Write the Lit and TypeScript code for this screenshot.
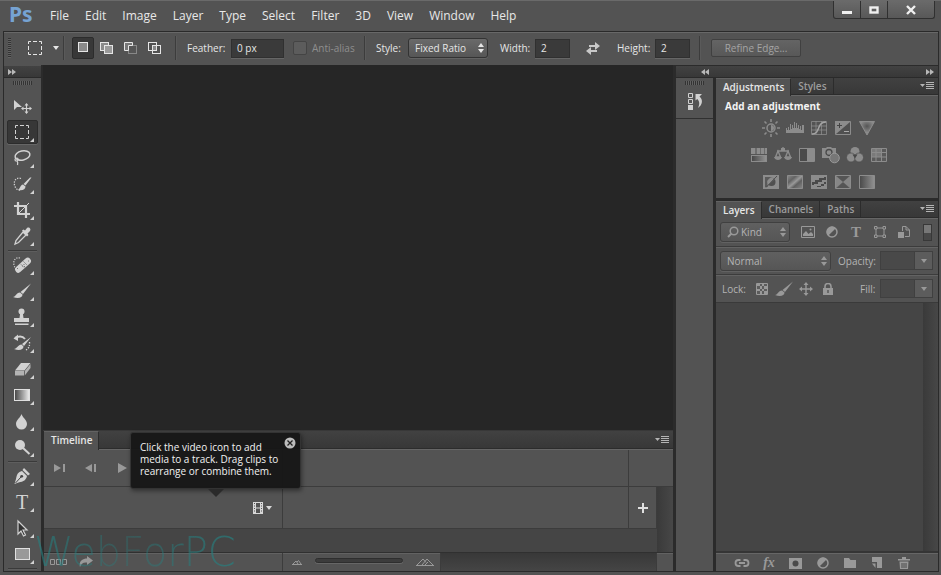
import { LitElement, html, css, svg, nothing } from "lit";
import { customElement, property, state } from "lit/decorators.js";
import { classMap } from "lit/directives/class-map.js";

type Glyph = { w: number; h: number; body: unknown };
const g = (w: number, h: number, body: unknown): Glyph => ({ w, h, body });

const glyphs: Record<string, Glyph> = {
  // toolbox
  move: g(20, 20, svg`<path d="M2 4v10l3-3h5z" fill="currentColor"/><path d="M14.5 8v9M10 12.500h9" stroke="currentColor" stroke-width="1.200"/><path d="M12.500 9.500l2-2.500 2 2.500zM12.500 15.500l2 2.500 2-2.500zM11.500 10.500l-2.500 2 2.500 2zM17.500 10.500l2.500 2-2.500 2z" fill="currentColor"/>`),
  marquee: g(20, 20, svg`<path d="M3.500 6V3.500H6M8 3.500h4M14 3.500h2.500V6M16.500 8v4M16.500 14v2.500H14M12 16.500H8M6 16.500H3.500V14M3.500 12V8" fill="none" stroke="currentColor"/>`),
  lasso: g(20, 20, svg`<ellipse cx="10.500" cy="7.500" rx="7.500" ry="4.500" transform="rotate(-12 10.500 7.500)" fill="none" stroke="currentColor" stroke-width="1.500"/><path d="M4.500 10c-2 .5-2 3 0 3s2-3 .3-3M5 13c1 1 1 2 .5 4" fill="none" stroke="currentColor" stroke-width="1.200"/>`),
  quick: g(20, 20, svg`<path d="M9 4.500C4 3 1.500 7 2.500 11c.7 3 3 5.500 6 5" fill="none" stroke="currentColor" stroke-width="1.300" stroke-dasharray="1.300 1.300"/><path d="M19.500 3.500l-6 8-2-1.500 6.500-6.500zM11 10.500l2.500 2c0 3-3 4.500-7.500 3.500 2-.8 2-5 5-5.500z" fill="currentColor"/>`),
  crop: g(20, 20, svg`<path d="M6 2v12h12M2 6h12v12" fill="none" stroke="currentColor" stroke-width="2.200"/><path d="M6.500 13.500L17 3" stroke="currentColor"/>`),
  dropper: g(20, 20, svg`<path d="M11 6l3 3-7.500 7.500L3 18l1-3.500z" fill="#555" stroke="currentColor" stroke-width="1.300"/><path d="M10 4.500l1.500-1 1.500 1 2-2.500c2-1.500 4.500 1 3 3l-2.500 2.500 1 1.500-1.500 1.500z" fill="currentColor"/>`),
  heal: g(20, 20, svg`<path d="M8 3C3 2 1 6 2 10c.5 2 1 3 2.500 4" fill="none" stroke="currentColor" stroke-width="1.200" stroke-dasharray="1.200 1.300"/><rect x="1.500" y="7" width="19" height="6.500" rx="3.200" transform="rotate(-42 11 10.200)" fill="currentColor"/><path d="M8.300 8.700l4 4M11.200 6.200l4 4" stroke="#999"/><path d="M11.500 9.500h1M10 11h1M12 11.500h1M5 13.500h1M16 6h1" stroke="#777"/>`),
  brush: g(20, 20, svg`<path d="M19 2.500L11 13l-2.500-2zM8 11.500l2.500 2c0 3-4 4.500-9.500 2.500 3 0 3-4.500 7-4.500z" fill="currentColor"/>`),
  stamp: g(20, 20, svg`<circle cx="9.500" cy="4.500" r="3" fill="currentColor"/><path d="M8.200 6h2.600l.7 5H17v4H2v-4h5.500zM3 16.500h13.500V18H3z" fill="currentColor"/>`),
  history: g(20, 20, svg`<path d="M19 4l-7 9-2-2zM9.500 11.500l2 2c0 3-4 4.500-9.500 2.500 3 0 4-4.500 7.500-4.500z" fill="currentColor"/><path d="M3 5c4-2 8-1.500 10 1" fill="none" stroke="currentColor" stroke-width="2"/><path d="M1.500 5.500L6 1.500V8z" fill="currentColor"/><path d="M17.500 9c.5 4-1 7-4 8" fill="none" stroke="currentColor" stroke-width="1.300" stroke-dasharray="1.300 1.300"/>`),
  eraser: g(20, 20, svg`<path d="M9 4h9.500l-6 7.500H3z" fill="currentColor"/><path d="M3 12h9v4.500H3zM12.800 12l5.700-7v4l-5.700 7.500z" fill="#b4b4b4"/>`),
  gradient: g(20, 20, svg`<linearGradient id="gr"><stop stop-color="#444"/><stop offset="1" stop-color="#eee"/></linearGradient><rect x="2.500" y="4.500" width="15" height="11" fill="url(#gr)" stroke="#e0e0e0"/>`),
  drop: g(20, 20, svg`<path d="M9.500 3c1 3.500 5.500 6 5.500 10a5.500 5.500 0 0 1-11 0c0-4 4.500-6.500 5.500-10z" fill="currentColor"/>`),
  dodge: g(20, 20, svg`<circle cx="8" cy="8" r="5" fill="currentColor"/><path d="M11 11l6.500 6" stroke="currentColor" stroke-width="2"/>`),
  pen: g(20, 20, svg`<path d="M12 2l6 6-2 1.500-5.500-5.500z" fill="currentColor"/><path d="M10 5l5 5c-1 4-3 5.500-8.500 6.500l-4 1.500L4 13c1-5 2-7 6-8z" fill="currentColor"/><path d="M3.500 17l5.500-6" stroke="#444"/><circle cx="9.700" cy="10.300" r="1.400" fill="#444"/>`),
  pointer: g(20, 20, svg`<path d="M6 3v13l3-3 2.500 5 2-1-2.500-5h4z" fill="#333" stroke="currentColor" stroke-width="1.200"/>`),
  shape: g(20, 20, svg`<rect x="3.500" y="4.500" width="14" height="11" fill="#999" stroke="#e0e0e0"/>`),
  // window and small marks
  caret: g(6, 4, svg`<path d="M0 0h6L3 4z" fill="currentColor"/>`),
  updown: g(6, 10, svg`<path d="M0 4h6L3 0zM0 6h6l-3 4z" fill="currentColor"/>`),
  right2: g(8, 6, svg`<path d="M0 0l4 3-4 3zM4 0l4 3-4 3z" fill="currentColor"/>`),
  left2: g(8, 6, svg`<path d="M4 0L0 3l4 3zM8 0L4 3l4 3z" fill="currentColor"/>`),
  flyout: g(14, 8, svg`<path d="M0 2h5L2.500 5z" fill="currentColor"/><path d="M6 .5h8M6 2.500h8M6 4.500h8M6 6.500h8" stroke="currentColor"/>`),
  min: g(10, 10, svg`<path d="M0 6h10v3H0z" fill="currentColor"/>`),
  max: g(10, 10, svg`<rect x="1.500" y="2.500" width="7" height="5" fill="none" stroke="currentColor" stroke-width="2.400"/>`),
  close: g(10, 10, svg`<path d="M1 1l8 8M9 1L1 9" stroke="currentColor" stroke-width="2.400"/>`),
  // selection modes
  selNew: g(14, 14, svg`<rect x="2.500" y="1.500" width="9" height="9" fill="#8a8a8a" stroke="currentColor"/>`),
  selAdd: g(14, 14, svg`<rect x=".5" y="1.500" width="8" height="8" fill="#8a8a8a" stroke="currentColor"/><rect x="4.500" y="4.500" width="8" height="8" fill="#9a9a9a" stroke="currentColor"/>`),
  selSub: g(14, 14, svg`<rect x="4.500" y="4.500" width="8" height="8" fill="#555" stroke="#888"/><path d="M4.500 9.500h-4v-8h8v3h-4z" fill="#777" stroke="currentColor"/>`),
  selInt: g(14, 14, svg`<rect x=".5" y="1.500" width="8" height="8" fill="none" stroke="currentColor"/><rect x="4.500" y="4.500" width="8" height="8" fill="none" stroke="currentColor"/><path d="M5 5h3v4H5z" fill="#888"/>`),
  swap: g(14, 14, svg`<path d="M3 4h6V1l5 4-5 4V6H3zM11 9H5V6L0 10l5 4v-3h6z" fill="currentColor"/>`),
  // timeline
  toStart: g(12, 8, svg`<path d="M0 0l7 4-7 4zM9 0h2v8H9z" fill="currentColor"/>`),
  stepBack: g(12, 8, svg`<path d="M7 0L0 4l7 4zM9 0h2v8H9z" fill="currentColor"/>`),
  play: g(10, 10, svg`<path d="M1 0l9 5-9 5z" fill="currentColor"/>`),
  film: g(10, 12, svg`<path d="M0 0h10v12H0zM3 1v4.500h4V1zM3 6.500V11h4V6.500zM1 1v1h1V1zM1 3.500v1h1v-1zM1 6v1h1V6zM1 8.500v1h1v-1zM8 1v1h1V1zM8 3.500v1h1v-1zM8 6v1h1V6zM8 8.500v1h1v-1z" fill="currentColor" fill-rule="evenodd"/>`),
  plus: g(10, 10, svg`<path d="M4 0h2v4h4v2H6v4H4V6H0V4h4z" fill="currentColor"/>`),
  frames: g(18, 8, svg`<path d="M.5 1.500h4v5h-4zM6.500 1.500h4v5h-4zM12.500 1.500h4v5h-4z" fill="none" stroke="currentColor"/>`),
  share: g(14, 12, svg`<path d="M8 0l6 4.500L8 9V6.500C4 6 2 8 1 11-.5 6 3 2.500 8 2.500z" fill="currentColor"/>`),
  hillS: g(10, 6, svg`<path d="M0 5.500h10M1 5l3-3 2 3M5 3l1.500-1.500L9 5" fill="none" stroke="currentColor"/>`),
  hillL: g(18, 8, svg`<path d="M0 7.500h18M1 7l6-6 3 3.500M6 7l5-6 6 6M9 7l3-3" fill="none" stroke="currentColor"/>`),
  x: g(12, 12, svg`<circle cx="6" cy="6" r="5.500" fill="#bdbdbd"/><path d="M3.500 3.500l5 5M8.500 3.500l-5 5" stroke="#222" stroke-width="1.300"/>`),
  // dock
  historyPanel: g(16, 18, svg`<path d="M1.500 1.500h4v4h-4zM1.500 7.500h4v4h-4z" fill="none" stroke="currentColor"/><path d="M1 13h5v5H1z" fill="currentColor"/><path d="M8.500 2H15L12.500 4.500c3.500 3 3.500 8-1.500 11.500 2-4 1.500-7-.8-9L8.500 8.500z" fill="currentColor"/>`),
  // adjustments
  sun: g(18, 18, svg`<circle cx="9" cy="9" r="4" fill="none" stroke="currentColor" stroke-width="1.500"/><path d="M9 6a3 3 0 0 1 0 6z" fill="currentColor"/><path d="M9 0v3M9 15v3M0 9h3M15 9h3M2.500 2.500l2 2M13.500 13.500l2 2M15.500 2.500l-2 2M4.500 13.500l-2 2" stroke="currentColor" stroke-width="1.600"/>`),
  levels: g(18, 18, svg`<path d="M0 14V9h1v2h1V8h1v3h1V5h1v5h1V6h1v3h1V3h1v6h1V4h1v5h1V6h1v4h1V7h1v4h1V6h2v8z" fill="currentColor"/>`),
  curves: g(18, 18, svg`<path d="M1.500 2.500h15v13h-15zM1 7h16M1 11h16M6 2v14M11.500 2v14" fill="none" stroke="currentColor" opacity=".8"/><path d="M2 15C11 15 6 3 16 3" fill="none" stroke="#a4a4a4" stroke-width="1.500"/>`),
  exposure: g(18, 18, svg`<path d="M1.500 2.500h15v13h-15z" fill="#505050" stroke="currentColor"/><path d="M2 15L16 3v-1H1v13z" fill="currentColor"/><path d="M3 6.500h5M5.500 4v5" stroke="#444"/><path d="M10 12.500h5" stroke="#aaa"/>`),
  vibrance: g(18, 18, svg`<radialGradient id="vb" cx=".5" cy=".35"><stop stop-color="#555"/><stop offset="1" stop-color="#8f8f8f"/></radialGradient><path d="M1.500 2.500h15L9 16z" fill="url(#vb)" stroke="currentColor"/>`),
  hue: g(18, 18, svg`<linearGradient id="hu"><stop stop-color="#484848"/><stop offset="1" stop-color="#929292"/></linearGradient><path d="M1 2h16v14H1z" fill="currentColor"/><path d="M5 2h2v6H5zM10 2h1v6h-1zM14 2h1v6h-1z" fill="#6c6c6c"/><path d="M1 8h16v1H1z" fill="#555"/><path d="M2 10h14v5H2z" fill="url(#hu)"/>`),
  balance: g(18, 18, svg`<path d="M9 1v4M3 5h12M4 5L1.500 11h5zM14 5l-2.500 6h5z" fill="none" stroke="currentColor" stroke-width="1.400"/><path d="M0 11h8c-1 4-7 4-8 0zM10 11h8c-1 4-7 4-8 0zM7 2h4v3H7z" fill="currentColor"/>`),
  bw: g(18, 18, svg`<path d="M1.500 2.500h15v13h-15z" fill="#4a4a4a" stroke="currentColor"/><path d="M9 3h7v12H9z" fill="currentColor"/>`),
  photo: g(18, 18, svg`<path d="M0 2h4l1-1h4l1 1h4v10H0z" fill="currentColor"/><circle cx="7" cy="6.500" r="3" fill="none" stroke="#4a4a4a" stroke-width="1.300"/><circle cx="12.500" cy="12" r="4.800" fill="#777" stroke="#999"/>`),
  mixer: g(18, 18, svg`<circle cx="9" cy="5.500" r="4.500" fill="currentColor"/><circle cx="5" cy="11.500" r="4.500" fill="currentColor" stroke="#4d4d4d" stroke-width=".7"/><circle cx="13" cy="11.500" r="4.500" fill="currentColor" stroke="#4d4d4d" stroke-width=".7"/><path d="M9 12.500L6.500 8.500h5z" fill="#484848"/>`),
  lookup: g(18, 18, svg`<path d="M1.500 2.500h15v13h-15z" fill="#5a5a5a"/><path d="M2 3h9v8H2z" fill="#7a7a7a"/><path d="M1.500 2.500h15v13h-15zM1 6.500h16M1 11h16M6 2v14M11.500 2v14" fill="none" stroke="currentColor"/>`),
  invert: g(18, 18, svg`<path d="M1 2h16v14H1z" fill="currentColor"/><path d="M3 4h9a6 6 0 0 0-6 9l-1 1H3z" fill="#5a5a5a"/><circle cx="9.500" cy="9" r="4" fill="#505050"/><path d="M12.500 6.200a4 4 0 0 0-6 5.500z" fill="currentColor"/><path d="M15 3L4 14.500" stroke="#505050"/>`),
  poster: g(18, 18, svg`<linearGradient id="ps" x2="1" y2="1"><stop stop-color="#8a8a8a"/><stop offset=".3" stop-color="#636363"/><stop offset=".5" stop-color="#999"/><stop offset=".65" stop-color="#606060"/><stop offset="1" stop-color="#888"/></linearGradient><path d="M1.500 2.500h15v13h-15z" fill="url(#ps)" stroke="currentColor"/>`),
  threshold: g(18, 18, svg`<path d="M1 2h16v14H1z" fill="currentColor"/><path d="M2 9h3V7h4V5h5V4h2v3h-4v2H8v2H4v1H2zM7 13h4v-2h3V9h2v2h-2v2h-3v1H7z" fill="#4a4a4a"/>`),
  selective: g(18, 18, svg`<path d="M1.500 2.500h15v13h-15z" fill="#626262" stroke="currentColor"/><path d="M3 3h12L9 9zM3 15h12L9 9z" fill="#555"/><path d="M2 3l7 6-7 6zM16 3L9 9l7 6z" fill="#868686"/>`),
  gradMap: g(18, 18, svg`<linearGradient id="gm"><stop stop-color="#484848"/><stop offset="1" stop-color="#929292"/></linearGradient><path d="M1.500 2.500h15v13h-15z" fill="url(#gm)" stroke="currentColor"/>`),
  // layers
  search: g(12, 12, svg`<circle cx="7" cy="5" r="3.800" fill="none" stroke="currentColor" stroke-width="1.500"/><path d="M4.500 7.500L1 11" stroke="currentColor" stroke-width="2"/>`),
  image: g(14, 12, svg`<path d="M.5 .5h13v11H.5z" fill="none" stroke="currentColor"/><path d="M2 10V8l3-3 2.500 3L10 6l2 2v2z" fill="currentColor"/><circle cx="9.500" cy="3.500" r="1" fill="currentColor"/>`),
  half: g(12, 12, svg`<circle cx="6" cy="6" r="5" fill="none" stroke="currentColor" stroke-width="1.500"/><path d="M9.800 2.200A5.300 5.300 0 1 0 2.200 9.800z" fill="currentColor"/>`),
  vector: g(12, 12, svg`<path d="M2 2h8v8H2z" fill="none" stroke="currentColor"/><path d="M.5 .5h2.500v2.500H.5zM9 .5h2.500v2.500H9zM.5 9h2.500v2.500H.5zM9 9h2.500v2.500H9z" fill="#555" stroke="currentColor"/>`),
  smart: g(12, 12, svg`<path d="M4.500 5V.5H8L11.500 4v6.500H7M8 .5V4h3.500" fill="none" stroke="currentColor"/><path d="M0 6h6v6H0z" fill="currentColor"/>`),
  checker: g(12, 12, svg`<path d="M.5 .5h11v11H.5z" fill="#5c5c5c" stroke="currentColor"/><path d="M1 1h3v2H1zM6 1h2v2H6zM4 3h2v3H4zM8 3h3v3H8zM1 6h3v2H1zM6 6h2v2H6zM4 8h2v3H4zM8 8h3v3H8z" fill="currentColor"/>`),
  cross4: g(14, 14, svg`<path d="M7 2v10M2 7h10" stroke="currentColor" stroke-width="1.400"/><path d="M4.500 3L7 0l2.500 3zM4.500 11L7 14l2.500-3zM3 4.500L0 7l3 2.500zM11 4.500L14 7l-3 2.500z" fill="currentColor"/>`),
  lock: g(10, 12, svg`<path d="M2 6V3.500a3 3 0 0 1 6 0V6" fill="none" stroke="currentColor" stroke-width="1.600"/><path d="M0 5h10v7H0zM4.300 7v3h1.400V7z" fill="currentColor" fill-rule="evenodd"/>`),
  link: g(16, 10, svg`<path d="M6.500 2H4.500a3 3 0 0 0 0 6h2M9.500 2h2a3 3 0 0 1 0 6h-2M5 5h6" fill="none" stroke="currentColor" stroke-width="1.800"/>`),
  mask: g(14, 12, svg`<path d="M0 1h13v11H0z" fill="currentColor"/><circle cx="6.500" cy="6.500" r="3" fill="#4a4a4a"/>`),
  folder: g(12, 12, svg`<path d="M0 1h5l1.500 2H12v8H0z" fill="currentColor"/>`),
  newLayer: g(12, 12, svg`<path d="M1 0h10v11H6V5H1z" fill="currentColor"/><path d="M1 6.500h3.500V11z" fill="currentColor"/>`),
  trash: g(12, 12, svg`<path d="M0 2h4V0h4v2h4v1.500H0zM1.500 4.500h9L10 12H2z" fill="currentColor"/><path d="M4 6v5M6 6v5M8 6v5" stroke="#4a4a4a"/>`),
};

const icon = (name: string) => {
  const i = glyphs[name];
  return html`<svg width=${i.w} height=${i.h} viewBox="0 0 ${i.w} ${i.h}" aria-hidden="true">${i.body}</svg>`;
};

const shared = css`
  :host, * { box-sizing: border-box; }
  button, input, select {
    font: inherit; color: inherit; margin: 0; padding: 0;
    border: 0; border-radius: 0; background: none; outline: none;
  }
  button { display: flex; align-items: center; justify-content: center; flex: none; }
  svg { display: block; flex: none; }
  .tabs {
    display: flex; height: 17px; flex: none;
    background: linear-gradient(#414141, #383838);
    border-bottom: 1px solid #2c2c2c; box-shadow: 0 1px #666;
    position: relative;
  }
  .tab {
    height: 100%; padding: 0 6px 0 7px; color: #9c9c9c; font-weight: 600;
    border-right: 1px solid #2c2c2c;
  }
  .tab.on { height: calc(100% + 2px); padding-bottom: 2px; background: #535353; color: #e6e6e6; border-top: 1px solid #626262; }
  .fly { margin-left: auto; padding: 0 4px; color: #b4b4b4; }
  .pick { display: inline-grid; align-items: center; }
  .pick > * { grid-area: 1 / 1; }
  .pick select {
    appearance: none; width: 100%; height: 20px; padding: 0 8px 0 6px;
    border: 1px solid #333; border-radius: 3px;
    background: linear-gradient(#6a6a6a, #565656); box-shadow: 0 1px #626262;
  }
  .pick svg { pointer-events: none; }
  .pick .arrows { justify-self: end; margin-right: 4px; display: block; pointer-events: none; }
`;

@customElement("tool-box")
class ToolBox extends LitElement {
  @state() active = "marquee";
  static styles = [shared, css`
    :host { display: flex; flex-direction: column; width: 37px; flex: none; background: #535353; color: #d2d2d2; }
    .head { height: 12px; margin-top: 1px; background: linear-gradient(#424242, #383838); border-bottom: 1px solid #2a2a2a; color: #b8b8b8; justify-content: flex-start; padding-left: 4px; }
    .grip { height: 4px; width: 19px; margin: 3px 9px 8px; flex: none; background: repeating-linear-gradient(90deg, #333 0 1px, #626262 1px 2px); }
    .tool { position: relative; width: 31px; height: 24px; margin: 1px 3px; border: 1px solid transparent; border-radius: 2px; padding-right: 1px; }
    .tool.on { background: #373737; border-color: #2c2c2c; box-shadow: 0 1px #666; }
    .more::after { content: ""; position: absolute; right: 3px; bottom: 1px; border: 2px solid #d2d2d2; border-top-color: transparent; border-left-color: transparent; }
    .type { font: 20px/20px "Liberation Serif", serif; }
    hr { height: 1px; border: 0; margin: 1px 4px; width: 29px; background: #3a3a3a; box-shadow: 0 1px #5e5e5e; flex: none; }
  `];
  groups = [
    ["move", "marquee", "lasso", "quick", "crop", "dropper"],
    ["heal", "brush", "stamp", "history", "eraser", "gradient", "drop", "dodge"],
    ["pen", "type", "pointer", "shape"],
  ];
  render() {
    return html`
      <button class="head" aria-label="Expand tools">${icon("right2")}</button>
      <div class="grip"></div>
      ${this.groups.map(names => html`
        ${names.map(n => html`<button aria-label=${n}
          class=${classMap({ tool: true, more: n !== "move", on: n === this.active })}
          @click=${() => (this.active = n)}>${n === "type" ? html`<span class="type">T</span>` : icon(n)}</button>`)}
        <hr>`)}
    `;
  }
}

@customElement("options-bar")
class OptionsBar extends LitElement {
  static styles = [shared, css`
    :host { display: flex; align-items: center; height: 33px; flex: none; border-top: 1px solid #686868; color: #e6e6e6; padding: 0 0 2px 4px; overflow: hidden; white-space: nowrap; }
    .grip { width: 3px; height: 20px; background: repeating-linear-gradient(#333 0 1px, #626262 1px 2px); margin-right: 14px; flex: none; }
    .preset { gap: 8px; width: 38px; justify-content: flex-start; }
    i { width: 2px; height: 24px; background: #3c3c3c; border-right: 1px solid #5a5a5a; flex: none; }
    .modes { display: flex; gap: 2px; margin: 0 9px 0 7px; }
    .modes button { width: 22px; height: 22px; border-radius: 2px; }
    .modes .on { background: #383838; border: 1px solid #2c2c2c; }
    .pair { display: flex; align-items: center; flex: none; }
    .pair span { flex: none; }
    .feather { margin-left: 10px; } .feather span { width: 44px; }
    .dim span { width: 35px; }
    .dim.tall span { width: 38px; }
    input[type="text"] { width: 35px; height: 19px; padding: 0 5px; background: #3a3a3a; border: 1px solid #303030; box-shadow: 0 1px #666; }
    .feather input[type="text"] { width: 53px; }
    .anti { margin: 0 12px 0 9px; color: #8e8e8e; gap: 5px; }
    .anti span { width: 40px; }
    input[type="checkbox"] { appearance: none; width: 14px; height: 14px; border: 1px solid #444; border-radius: 2px; background: #5c5c5c; }
    .style { margin: 0 12px 0 10px; } .style > span { width: 32px; }
    .pick { width: 80px; }
    .swap { margin: 0 17px 0 16px; color: #c8c8c8; }
    .end { margin-left: 9px; }
    .refine { margin-left: 10px; width: 90px; height: 18px; color: #a4a4a4; border: 1px solid #404040; border-radius: 2px; background: linear-gradient(#646464, #585858); }
  `];
  render() {
    return html`
      <div class="grip"></div>
      <button class="preset" aria-label="Tool preset">${icon("marquee")}${icon("caret")}</button><i></i>
      <div class="modes">${["selNew", "selAdd", "selSub", "selInt"].map((n, k) =>
        html`<button class=${k ? "" : "on"} aria-label=${n}>${icon(n)}</button>`)}</div><i></i>
      <label class="pair feather"><span>Feather:</span><input type="text" value="0 px"></label>
      <label class="pair anti"><input type="checkbox" disabled><span>Anti-alias</span></label><i></i>
      <label class="pair style"><span>Style:</span>
        <div class="pick"><select><option>Fixed Ratio</option></select><span class="arrows">${icon("updown")}</span></div></label>
      <label class="pair dim"><span>Width:</span><input type="text" value="2"></label>
      <button class="swap" aria-label="Swap width and height">${icon("swap")}</button>
      <label class="pair dim tall"><span>Height:</span><input type="text" value="2"></label><i class="end"></i>
      <button class="refine">Refine Edge...</button>
    `;
  }
}

@customElement("timeline-panel")
class TimelinePanel extends LitElement {
  @state() hint = true;
  static styles = [shared, css`
    :host { display: block; position: relative; flex: none; background: #535353; color: #999; margin-left: 1px; }
    .tabs { height: 18px; }
    .row { display: grid; grid-template-columns: 239px 1fr 28px 16px; }
    .row > * { border-right: 1px solid #3c3c3c; }
    .controls { height: 38px; border-bottom: 1px solid #3c3c3c; grid-template-columns: 239px 1fr 44px; }
    .row > :last-child { border-right: 0; }
    .transport { display: flex; align-items: center; }
    .transport button { width: 31px; height: 20px; }
    .track { height: 42px; }
    .track > :not(.scroll) { border-bottom: 1px solid #3c3c3c; }
    .media { display: flex; justify-content: flex-end; align-items: center; padding-right: 10px; }
    .media button { gap: 3px; color: #d8d8d8; }
    .add { color: #e0e0e0; width: 100%; }
    .scroll { background: linear-gradient(90deg, #3a3a3a, #474747); }
    .empty { height: 24px; background: #454545; border-bottom: 1px solid #303030; grid-template-columns: 1fr 16px; }
    .empty > :first-child { border-right: 0; }
    .foot { height: 18px; grid-template-columns: 239px 158px 1fr 16px; box-shadow: inset 0 1px #626262; }
    .foot .left { display: flex; align-items: center; gap: 11px; padding-left: 6px; }
    .zoom { display: flex; align-items: center; justify-content: space-between; padding: 0 6px 0 9px; }
    input { appearance: none; width: 88px; height: 5px; border: 1px solid #2e2e2e; border-radius: 3px; background: #3c3c3c; margin-bottom: 3px; box-shadow: 0 1px #666; }
    input::-webkit-slider-thumb { appearance: none; width: 0; height: 0; }
    .hscroll { background: linear-gradient(#383838, #454545); }
    .hint { position: absolute; left: 86px; top: 1px; width: 171px; height: 57px; padding: 8px 9px; background: rgba(22, 22, 22, .95); border: 1px solid #333; border-radius: 3px; color: #f2f2f2; line-height: 12px; white-space: nowrap; box-shadow: 1px 2px 4px rgba(0, 0, 0, .4); }
    .hint::after { content: ""; position: absolute; left: 77px; top: 56px; border: 8px solid transparent; border-top-color: #2a2a2a; border-bottom: 0; }
    .hint button { position: absolute; right: 4px; top: 4px; }
  `];
  render() {
    return html`
      <div class="tabs"><button class="tab on">Timeline</button><button class="fly" aria-label="Panel menu">${icon("flyout")}</button></div>
      <div class="row controls">
        <div class="transport">${["toStart", "stepBack", "play"].map(n => html`<button aria-label=${n}>${icon(n)}</button>`)}</div>
        <div></div><div></div>
      </div>
      <div class="row track">
        <div class="media"><button aria-label="Add media">${icon("film")}${icon("caret")}</button></div>
        <div></div>
        <button class="add" aria-label="Add to track">${icon("plus")}</button>
        <div class="scroll"></div>
      </div>
      <div class="row empty"><div></div><div class="scroll"></div></div>
      <div class="row foot">
        <div class="left"><button aria-label="Frame animation">${icon("frames")}</button><button aria-label="Render">${icon("share")}</button></div>
        <div class="zoom">${icon("hillS")}<input type="range" aria-label="Zoom">${icon("hillL")}</div>
        <div class="hscroll"></div><div></div>
      </div>
      ${this.hint ? html`<div class="hint">Click the video icon to add<br>media to a track. Drag clips to<br>rearrange or combine them.
        <button aria-label="Close" @click=${() => (this.hint = false)}>${icon("x")}</button></div>` : nothing}
    `;
  }
}

@customElement("adjust-panel")
class AdjustPanel extends LitElement {
  static styles = [shared, css`
    :host { display: block; height: 120px; background: #535353; flex: none; }
    h2 { margin: 0; padding: 4px 9px 1px; font-size: 10px; line-height: 14px; color: #f4f4f4; }
    .grid { padding-right: 16px; color: #8c8c8c; }
    .line { display: flex; justify-content: center; gap: 6px; height: 27px; }
  `];
  rows = [
    ["sun", "levels", "curves", "exposure", "vibrance"],
    ["hue", "balance", "bw", "photo", "mixer", "lookup"],
    ["invert", "poster", "threshold", "selective", "gradMap"],
  ];
  render() {
    return html`
      <div class="tabs"><button class="tab on">Adjustments</button><button class="tab">Styles</button><button class="fly" aria-label="Panel menu">${icon("flyout")}</button></div>
      <h2>Add an adjustment</h2>
      <div class="grid">${this.rows.map(r => html`<div class="line">${r.map(n => html`<button aria-label=${n}>${icon(n)}</button>`)}</div>`)}</div>
    `;
  }
}

@customElement("layers-panel")
class LayersPanel extends LitElement {
  static styles = [shared, css`
    :host { display: flex; flex-direction: column; flex: 1; min-height: 0; background: #535353; color: #b4b4b4; }
    .row { display: flex; align-items: center; height: 28px; flex: none; padding: 0 5px 0 4px; }
    .row + .row { border-top: 1px solid #3c3c3c; box-shadow: inset 0 1px #636363; }
    .pick select { border-color: #404040; background: linear-gradient(#606060, #565656); color: #b4b4b4; }
    .kind { width: 70px; } .kind select { padding-left: 20px; }
    .kind > svg { margin-left: 7px; color: #999; }
    .mode { width: 111px; margin-right: 7px; }
    .arrows, .row button { color: #999; }
    .filters { display: flex; flex: 1; padding-left: 6px; }
    .filters button { width: 24px; height: 20px; }
    .type { font: 700 15px/20px "Liberation Serif", serif; }
    .switch { width: 9px; height: 17px; border: 1px solid #383838; background: #484848; padding-bottom: 7px; margin-right: 1px; }
    .switch::before { content: ""; width: 7px; height: 8px; background: #777; }
    .value { display: flex; flex: 1; align-items: center; }
    .value span { width: 42px; }
    .value input { flex: 1; width: 34px; min-width: 0; height: 19px; background: #494949; border: 1px solid #404040; }
    .value button { width: 18px; height: 19px; border: 1px solid #404040; border-left: 0; background: #5c5c5c; }
    .locks { display: flex; padding-left: 2px; margin-right: 18px; }
    .locks button { width: 22px; height: 20px; }
    .short { padding-left: 3px; } .short span { width: 20px; }
    .lock > span { width: 29px; flex: none; padding-left: 2px; }
    .list { flex: 1; background: #454545; border-top: 1px solid #3a3a3a; border-bottom: 2px solid #353535; }
    .bar { width: 15px; height: 100%; margin-left: auto; background: linear-gradient(90deg, #3a3a3a, #474747); }
    footer { display: flex; justify-content: center; height: 18px; flex: none; padding-right: 8px; color: #999; border-top: 1px solid #666; }
    footer button { width: 27px; height: 17px; }
    .fx { font: italic 700 14px/14px "Liberation Serif", serif; }
  `];
  render() {
    return html`
      <div class="tabs"><button class="tab on">Layers</button><button class="tab">Channels</button><button class="tab">Paths</button><button class="fly" aria-label="Panel menu">${icon("flyout")}</button></div>
      <div class="row">
        <div class="pick kind"><select aria-label="Filter"><option>Kind</option></select>${icon("search")}<span class="arrows">${icon("updown")}</span></div>
        <div class="filters">${["image", "half", "type", "vector", "smart"].map(n => html`<button aria-label=${n}>${n === "type" ? html`<span class="type">T</span>` : icon(n)}</button>`)}</div>
        <button class="switch" aria-label="Toggle filter"></button>
      </div>
      <div class="row blend">
        <div class="pick mode"><select aria-label="Blend mode"><option>Normal</option></select><span class="arrows">${icon("updown")}</span></div>
        <div class="value"><span id="op">Opacity:</span><input aria-labelledby="op"><button aria-label="Opacity slider">${icon("caret")}</button></div>
      </div>
      <div class="row lock">
        <span>Lock:</span>
        <div class="locks">${["checker", "brush", "cross4", "lock"].map(n => html`<button aria-label=${n}>${icon(n)}</button>`)}</div>
        <div class="value short"><span id="fill">Fill:</span><input aria-labelledby="fill"><button aria-label="Fill slider">${icon("caret")}</button></div>
      </div>
      <div class="list"><div class="bar"></div></div>
      <footer>${["link", "fx", "mask", "half", "folder", "newLayer", "trash"].map(n => html`<button aria-label=${n}>${n === "fx" ? html`<span class="fx">fx</span>` : icon(n)}</button>`)}</footer>
    `;
  }
}

@customElement("app-root")
class AppRoot extends LitElement {
  @property() menus = ["File", "Edit", "Image", "Layer", "Type", "Select", "Filter", "3D", "View", "Window", "Help"];
  static styles = [shared, css`
    :host { display: flex; flex-direction: column; position: relative; height: 100vh; overflow: hidden; background: #535353; font: 10px/14px "Open Sans", "Noto Sans", sans-serif; padding: 0 2px 3px 3px; border-top: 1px solid #6a6a6a; }
    header { display: flex; height: 30px; flex: none; color: #e8e8e8; }
    .ps { width: 39px; padding-left: 6px; font: 700 21px/26px "Noto Sans", sans-serif; color: #76a3d3; }
    nav { display: flex; align-items: center; font-size: 12px; }
    nav button { padding: 0 8px; height: 30px; }
    .win { display: flex; margin: 0 4px 0 auto; height: 18px; border: 1px solid #303030; border-top: 0; border-radius: 0 0 3px 3px; background: linear-gradient(#6a6a6a, #585858); color: #f0f0f0; }
    .win button { width: 27px; border-right: 1px solid #303030; }
    .win button:last-child { width: 46px; border-right: 0; }
    .frame { display: flex; flex-direction: column; flex: 1; min-height: 0; border: 1px solid #2a2a2a; }
    .work { display: flex; flex: 1; min-height: 0; background: #2b2b2b; }
    main { display: flex; flex-direction: column; flex: 1; min-width: 0; padding: 0 3px 0 2px; }
    .canvas { flex: 1; background: #262626; border-bottom: 1px solid #383838; }
    .dock { display: flex; flex-direction: column; width: 262px; flex: none; padding-top: 1px; }
    .head { display: flex; justify-content: space-between; height: 12px; flex: none; background: linear-gradient(#424242, #383838); border-bottom: 1px solid #2a2a2a; color: #b8b8b8; padding: 0 4px 0 25px; }
    .cols { display: flex; flex: 1; min-height: 0; gap: 3px; }
    .strip { width: 37px; background: #535353; }
    .strip div { height: 41px; border-bottom: 1px solid #303030; padding: 3px 9px; }
    .grip { display: block; height: 4px; background: repeating-linear-gradient(90deg, #333 0 1px, #626262 1px 2px); }
    .strip button { width: 19px; height: 32px; color: #d0d0d0; }
    .panels { display: flex; flex-direction: column; flex: 1; gap: 3px; }
    .mark { position: absolute; left: 34px; bottom: 1px; font: 200 40px/44px "DejaVu Sans", sans-serif; color: transparent; background: linear-gradient(90deg, rgba(38, 128, 128, .65), rgba(38, 128, 128, .3) 45%, rgba(38, 128, 128, .7)); background-clip: text; -webkit-background-clip: text; pointer-events: none; }
  `];
  render() {
    return html`
      <header>
        <div class="ps">Ps</div>
        <nav>${this.menus.map(m => html`<button>${m}</button>`)}</nav>
        <div class="win"><button aria-label="Minimize">${icon("min")}</button><button aria-label="Maximize">${icon("max")}</button><button aria-label="Close">${icon("close")}</button></div>
      </header>
      <div class="frame">
        <options-bar></options-bar>
        <div class="work">
          <tool-box></tool-box>
          <main><div class="canvas"></div><timeline-panel></timeline-panel></main>
          <div class="dock">
            <div class="head"><button aria-label="Expand">${icon("left2")}</button><button aria-label="Collapse">${icon("right2")}</button></div>
            <div class="cols">
              <div class="strip"><div><span class="grip"></span><button aria-label="History">${icon("historyPanel")}</button></div></div>
              <div class="panels"><adjust-panel></adjust-panel><layers-panel></layers-panel></div>
            </div>
          </div>
        </div>
      </div>
      <div class="mark">WebForPC</div>
    `;
  }
}
